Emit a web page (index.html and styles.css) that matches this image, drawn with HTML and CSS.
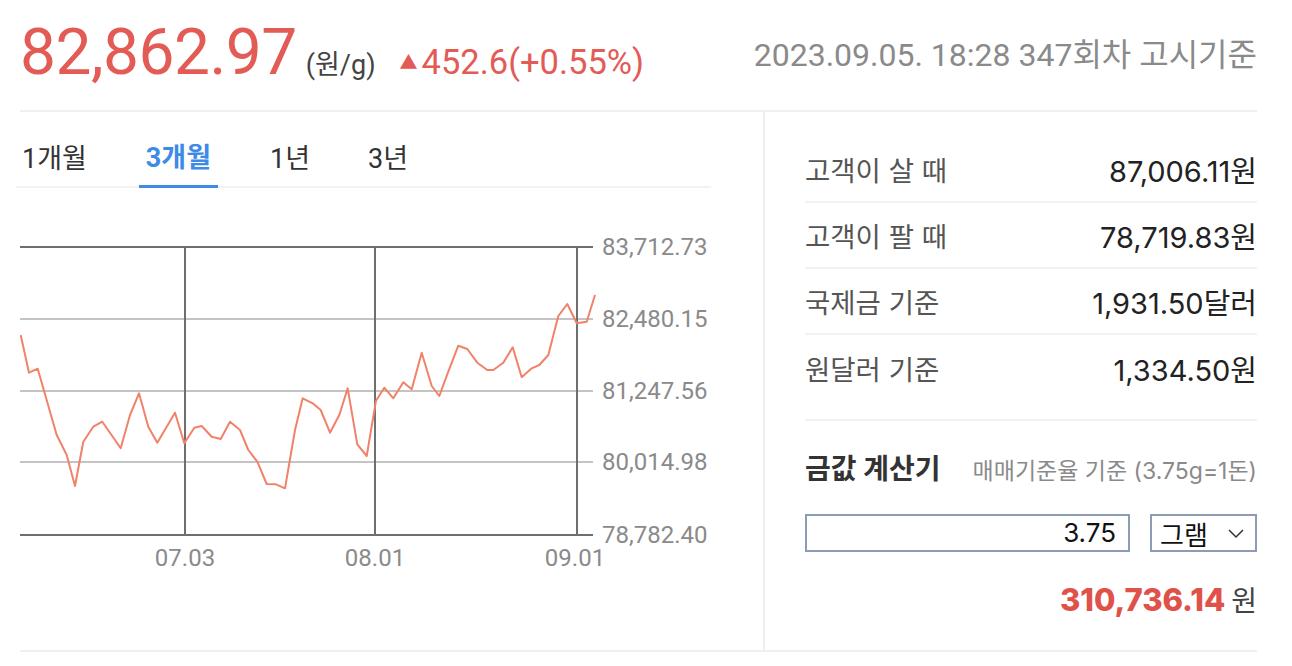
FILE: index.html
```html
<!DOCTYPE html>
<html lang="ko">
<head>
<meta charset="utf-8">
<title>금 시세</title>
<link rel="stylesheet" href="styles.css">
</head>
<body>
<div class="page">
  <header class="head">
    <div class="price">
      <span class="big">82,862.97</span>
      <span class="unit">(원/g)</span>
      <span class="chg"><span class="tri">▲</span>452.6(+0.55%)</span>
    </div>
    <div class="date">2023.09.05. 18:28 347회차 고시기준</div>
  </header>
  <div class="main">
    <section class="left">
      <nav class="tabs">
        <span class="tab">1개월</span>
        <span class="tab active">3개월</span>
        <span class="tab">1년</span>
        <span class="tab">3년</span>
      </nav>
      <svg class="chart" width="743" height="460" viewBox="20 188 743 460">
        <g class="grid-light">
          <line x1="20" y1="319" x2="593" y2="319"/>
          <line x1="20" y1="391" x2="593" y2="391"/>
          <line x1="20" y1="462" x2="593" y2="462"/>
        </g>
        <g class="grid-dark">
          <line x1="20" y1="247" x2="593" y2="247"/>
          <line x1="20" y1="535" x2="593" y2="535"/>
          <line x1="185" y1="247" x2="185" y2="535"/>
          <line x1="375" y1="247" x2="375" y2="535"/>
          <line x1="577" y1="247" x2="577" y2="535"/>
        </g>
        <polyline class="line" points="20.7,335 29,372.7 37.7,368.7 56.7,435 66.7,455 75,486 83.3,441.7 93.3,426.7 102.3,421.7 120.7,448.3 130,415 139,393.3 148.3,426.7 157.3,442.7 175,412.7 184.3,443.3 194.3,427.7 201.7,426 211.7,436.7 220.7,439 230,421.7 240,430 248.3,450 257.3,461.7 266.7,484 276,484.3 285,488.3 295,430 302.7,398.3 312.7,403.3 320.7,410 330,432.7 339.3,415 347.7,388.3 357.3,444.3 366.7,456 376,400.7 384.3,387.7 393.3,398.3 403.3,382.3 411.7,389.3 421.7,352.7 431.7,386 439.3,396 448.3,371.7 458.3,345.7 467.3,349 477.3,362.7 487.3,370 493.3,370 503.3,362.7 512.7,347.3 521.7,377.3 531.7,368.3 539.3,365 548.3,355 558.3,316 567.3,304 576.7,323.3 586.7,321.7 595,295"/>
        <g class="ylab">
          <text x="602" y="247">83,712.73</text>
          <text x="602" y="319">82,480.15</text>
          <text x="602" y="391">81,247.56</text>
          <text x="602" y="462">80,014.98</text>
          <text x="602" y="535">78,782.40</text>
        </g>
        <g class="xlab">
          <text x="185" y="558">07.03</text>
          <text x="375" y="558">08.01</text>
          <text x="575" y="558">09.01</text>
        </g>
      </svg>
    </section>
    <aside class="right">
      <div class="rows">
        <div class="row"><span class="lbl">고객이 살 때</span><span class="val">87,006.11원</span></div>
        <div class="row"><span class="lbl">고객이 팔 때</span><span class="val">78,719.83원</span></div>
        <div class="row"><span class="lbl">국제금 기준</span><span class="val">1,931.50달러</span></div>
        <div class="row"><span class="lbl">원달러 기준</span><span class="val">1,334.50원</span></div>
      </div>
      <div class="calc">
        <div class="calc-head">
          <span class="calc-title">금값 계산기</span>
          <span class="calc-note">매매기준율 기준 (3.75g=1돈)</span>
        </div>
        <div class="calc-inputs">
          <div class="amount">3.75</div>
          <div class="unit-select">
            <span>그램</span>
            <svg class="chev" width="18" height="11" viewBox="0 0 18 11"><path d="M2 2 L9 9 L16 2" fill="none" stroke="#333" stroke-width="1.5"/></svg>
          </div>
        </div>
        <div class="result"><span class="res-num">310,736.14</span><span class="res-unit">원</span></div>
      </div>
    </aside>
  </div>
</div>
</body>
</html>
```
FILE: styles.css
```css
* { box-sizing: border-box; }
html, body { margin: 0; padding: 0; background: #fff; }
body { font-family: Roboto, "Noto Sans CJK KR", sans-serif; color: #222; }
.page { width: 1292px; padding: 0 35px 0 20px; }

.head {
  height: 112px;
  border-bottom: 2px solid #f0f0f0;
  display: flex;
  align-items: center;
  justify-content: space-between;
  padding-bottom: 6px;
}
.price { display: flex; align-items: baseline; }
.big { font-size: 64px; color: #e35b55; letter-spacing: -0.5px; }
.unit { font-size: 27px; color: #444; margin-left: 9px; }
.chg { font-size: 34.5px; color: #e35b55; margin-left: 24px; display: flex; align-items: baseline; }
.tri { font-size: 18px; margin-right: 4px; position: relative; top: -5px; }
.date { font-size: 32px; color: #8a8a8a; }

.main {
  display: flex;
  height: 540px;
  border-bottom: 2px solid #f0f0f0;
}
.left { width: 745px; border-right: 2px solid #f0f0f0; }
.tabs {
  width: 695px;
  height: 76px;
  display: flex;
  gap: 46px;
  border-bottom: 2px solid #f2f2f2;
  margin-left: -4px;
}
.tab {
  display: flex;
  align-items: center;
  padding: 14px 6px 0;
  font-size: 27px;
  color: #333;
}
.tab.active {
  color: #3d8be6;
  font-weight: 700;
  border-bottom: 3px solid #3d8be6;
  margin-bottom: -2px;
  padding: 14px 7px 0;
}
.chart { display: block; }
.grid-light line { stroke: #c4c4c4; stroke-width: 2; }
.grid-dark line { stroke: #6f6f6f; stroke-width: 2; }
.line { fill: none; stroke: #f0826a; stroke-width: 2; stroke-linejoin: round; }
.ylab text { font-family: Roboto, sans-serif; font-size: 24px; fill: #8a8a8a; dominant-baseline: central; }
.xlab text { font-family: Roboto, sans-serif; font-size: 24px; fill: #8a8a8a; text-anchor: middle; dominant-baseline: central; }

.right { flex: 1; padding-left: 40px; font-family: Inter, "Noto Sans CJK KR", sans-serif; }
.rows { padding-top: 25px; }
.row {
  height: 66px;
  display: flex;
  align-items: center;
  justify-content: space-between;
  border-bottom: 2px solid #f2f2f2;
}
.row:last-child { border-bottom: none; }
.lbl { color: #555; font-size: 27.5px; }
.val { color: #222; font-size: 29px; }

.calc { margin-top: 18px; border-top: 2px solid #f2f2f2; }
.calc-head {
  display: flex;
  justify-content: space-between;
  align-items: baseline;
  padding-top: 26px;
  height: 93px;
}
.calc-title { font-size: 28px; font-weight: 700; color: #333; }
.calc-note { font-size: 23px; color: #8a8a8a; }
.calc-inputs { display: flex; gap: 20px; height: 38px; }
.amount {
  flex: 1;
  border: 2px solid #8c9cb3;
  font-size: 26px;
  color: #111;
  text-align: right;
  padding: 0 12px;
  line-height: 34px;
}
.unit-select {
  width: 107px;
  border: 2px solid #8c9cb3;
  display: flex;
  align-items: center;
  justify-content: space-between;
  padding: 0 10px 0 8px;
  font-size: 26px;
  color: #111;
}
.result {
  display: flex;
  justify-content: flex-end;
  align-items: baseline;
  padding-top: 27px;
}
.res-num { font-size: 31px; font-weight: 800; color: #e0514a; }
.res-unit { font-size: 28px; color: #444; margin-left: 6px; }
```
